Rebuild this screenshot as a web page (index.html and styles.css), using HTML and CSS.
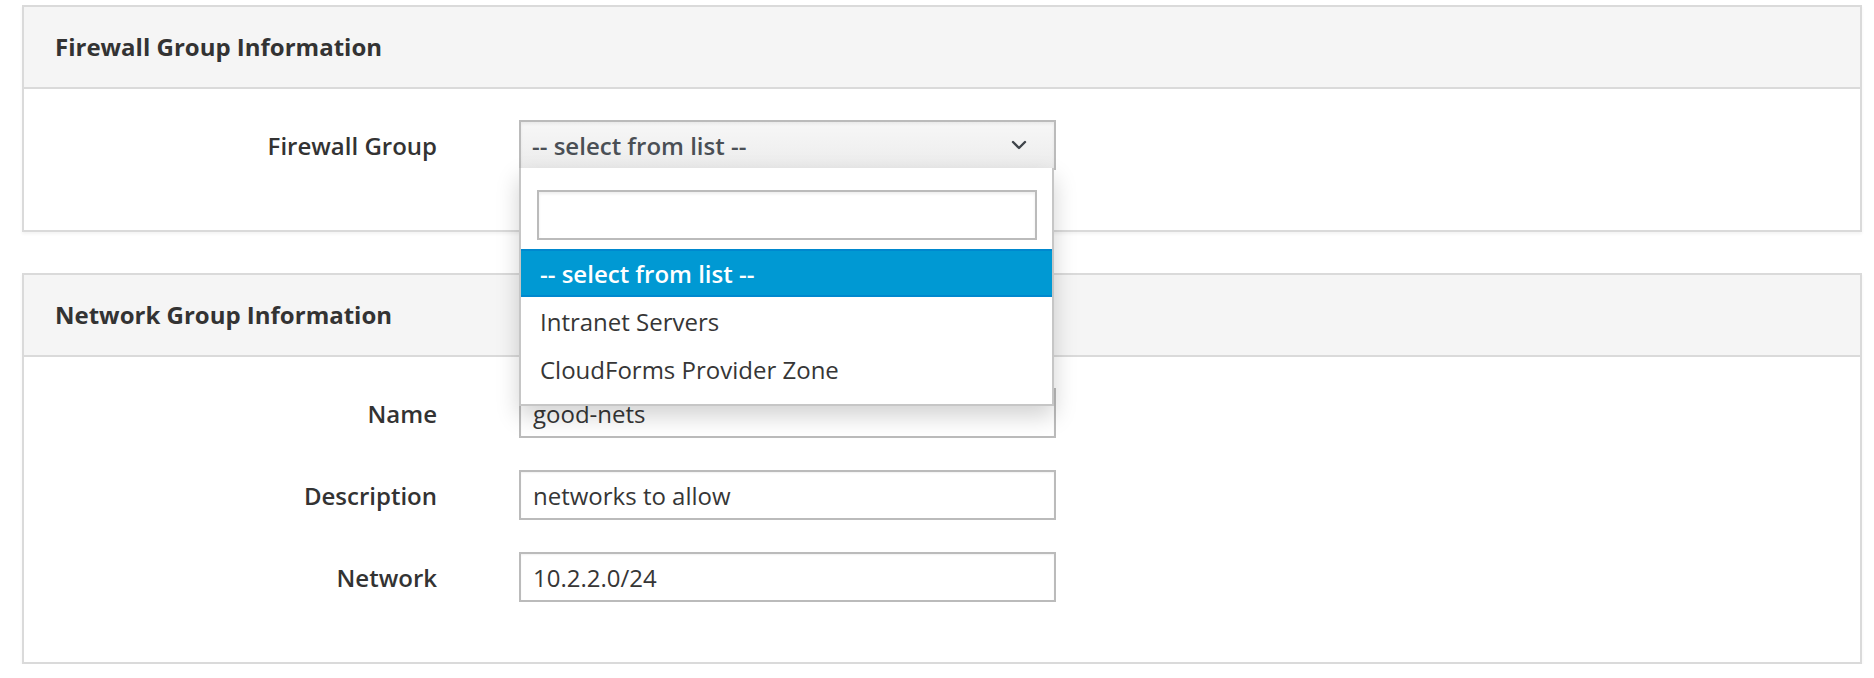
FILE: index.html
```html
<!DOCTYPE html>
<html lang="en">
<head>
<meta charset="utf-8">
<title>Firewall Group</title>
<link rel="stylesheet" href="styles.css">
</head>
<body>
<main class="page">
  <section class="panel">
    <header class="panel-heading">
      <h3 class="panel-title">Firewall Group Information</h3>
    </header>
    <div class="panel-body">
      <div class="form-grid">
        <label class="form-label">Firewall Group</label>
        <div class="select">
          <button class="select-toggle" type="button">
            <span class="select-text">-- select from list --</span>
            <svg class="chevron" width="16" height="10" viewBox="0 0 16 10" aria-hidden="true"><polyline points="2,2 8,8 14,2" fill="none" stroke="#3f444a" stroke-width="2.4" stroke-linecap="round" stroke-linejoin="round"/></svg>
          </button>
          <div class="select-menu">
            <div class="search-wrap"><input class="search-input" type="text"></div>
            <ul class="options">
              <li class="option active">-- select from list --</li>
              <li class="option">Intranet Servers</li>
              <li class="option">CloudForms Provider Zone</li>
            </ul>
          </div>
        </div>
      </div>
    </div>
  </section>

  <section class="panel">
    <header class="panel-heading">
      <h3 class="panel-title">Network Group Information</h3>
    </header>
    <div class="panel-body">
      <div class="form-grid">
        <label class="form-label">Name</label>
        <input class="form-control" type="text" value="good-nets">
        <label class="form-label">Description</label>
        <input class="form-control" type="text" value="networks to allow">
        <label class="form-label">Network</label>
        <input class="form-control" type="text" value="10.2.2.0/24">
      </div>
    </div>
  </section>
</main>
</body>
</html>
```

FILE: styles.css
```css
* { box-sizing: border-box; }

html, body {
  margin: 0;
  padding: 0;
  background: #fff;
}

body {
  font-family: "Open Sans", "Noto Sans", "Liberation Sans", sans-serif;
  color: #363636;
}

.page {
  padding: 5px 12px 0 22px;
  display: flex;
  flex-direction: column;
  gap: 41px;
}

.panel {
  border: 2px solid #dadada;
  background: #fff;
  box-shadow: 0 2px 3px rgba(0, 0, 0, 0.05);
}

.panel-heading {
  height: 82px;
  background: #f5f5f5;
  border-bottom: 2px solid #dadada;
  display: flex;
  align-items: center;
  padding-left: 31px;
}

.panel-title {
  margin: 0;
  font-size: 24px;
  font-weight: 700;
  color: #333333;
  line-height: 1;
}

.panel-body {
  padding: 31px 0 60px 0;
}

.form-grid {
  display: grid;
  grid-template-columns: 413px 537px;
  column-gap: 82px;
  row-gap: 32px;
  align-items: center;
}

.form-label {
  text-align: right;
  font-size: 24px;
  font-weight: 600;
  color: #333333;
}

.form-control {
  height: 50px;
  width: 537px;
  border: 2px solid #bbbbbb;
  padding: 0 12px;
  font-family: inherit;
  font-size: 24px;
  color: #363636;
  background: #fff;
  box-shadow: inset 0 1px 2px rgba(0, 0, 0, 0.06);
  outline: none;
}

.select {
  position: relative;
  width: 537px;
}

.select-toggle {
  width: 100%;
  height: 50px;
  border: 2px solid #bbbbbb;
  background: linear-gradient(to bottom, #f7f7f7 0%, #ececec 100%);
  display: flex;
  align-items: center;
  justify-content: space-between;
  padding: 0 27px 0 11px;
  font-family: inherit;
  font-size: 24px;
  font-weight: 600;
  color: #4a4f55;
  box-shadow: inset 0 2px 3px rgba(0, 0, 0, 0.06);
}

.chevron { display: block; }

.select-menu {
  position: absolute;
  top: 48px;
  left: 0;
  width: 535px;
  background: #fff;
  border: 2px solid #c6c6c6;
  border-top: none;
  padding: 22px 0 11px 0;
  box-shadow: 0 10px 22px rgba(0, 0, 0, 0.18);
  z-index: 10;
}

.search-wrap {
  padding: 0 15px 0 16px;
  margin-bottom: 9px;
}

.search-input {
  display: block;
  width: 100%;
  height: 50px;
  border: 2px solid #bbbbbb;
  box-shadow: inset 0 2px 3px rgba(0, 0, 0, 0.07);
  outline: none;
}

.options {
  list-style: none;
  margin: 0;
  padding: 0;
}

.option {
  height: 48px;
  display: flex;
  align-items: center;
  padding-left: 19px;
  font-size: 24px;
  color: #363636;
}

.option.active {
  background: #0099d3;
  color: #fff;
  font-weight: 600;
  box-shadow: inset 0 2px 0 #0088ce, inset 0 -2px 0 #0088ce;
}
```
